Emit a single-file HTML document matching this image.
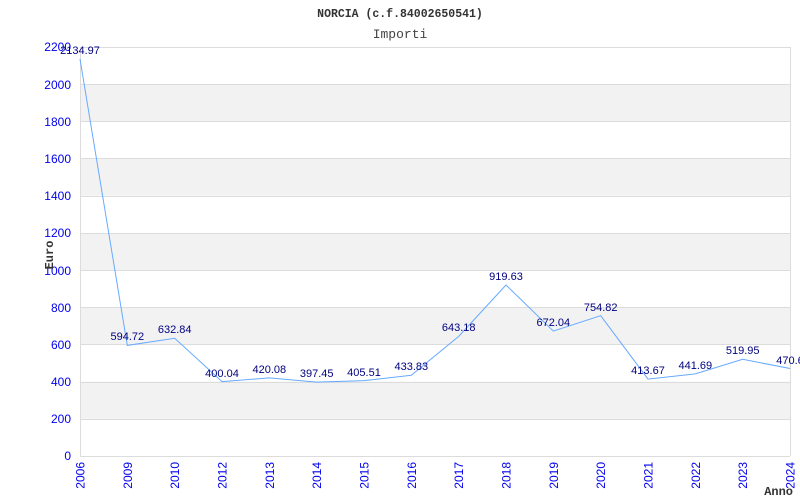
<!DOCTYPE html>
<html><head><meta charset="utf-8"><style>
html,body{margin:0;padding:0;background:#fff;}
svg{display:block;}
</style></head><body>
<svg width="800" height="500" xmlns="http://www.w3.org/2000/svg">
<rect width="800" height="500" fill="#fff"/>
<text x="400" y="17" text-anchor="middle" font-family="Liberation Mono, monospace" font-size="11.5" font-weight="bold" fill="#333">NORCIA (c.f.84002650541)</text>
<text x="400" y="38" text-anchor="middle" font-family="Liberation Mono, monospace" font-size="13" fill="#444">Importi</text>
<g fill="#f2f2f2">
<rect x="80" y="84.2" width="710" height="37.2"/>
<rect x="80" y="158.5" width="710" height="37.2"/>
<rect x="80" y="232.9" width="710" height="37.2"/>
<rect x="80" y="307.3" width="710" height="37.2"/>
<rect x="80" y="381.6" width="710" height="37.2"/>
</g>
<g stroke="#dcdcdc" stroke-width="1">
<line x1="80" y1="47.5" x2="790" y2="47.5"/>
<line x1="80" y1="84.5" x2="790" y2="84.5"/>
<line x1="80" y1="121.5" x2="790" y2="121.5"/>
<line x1="80" y1="158.5" x2="790" y2="158.5"/>
<line x1="80" y1="196.5" x2="790" y2="196.5"/>
<line x1="80" y1="233.5" x2="790" y2="233.5"/>
<line x1="80" y1="270.5" x2="790" y2="270.5"/>
<line x1="80" y1="307.5" x2="790" y2="307.5"/>
<line x1="80" y1="344.5" x2="790" y2="344.5"/>
<line x1="80" y1="382.5" x2="790" y2="382.5"/>
<line x1="80" y1="419.5" x2="790" y2="419.5"/>
<line x1="80" y1="456.5" x2="790" y2="456.5"/>
<line x1="80.5" y1="47" x2="80.5" y2="456"/>
<line x1="790.5" y1="47" x2="790.5" y2="456"/>
</g>
<g font-family="Liberation Sans, sans-serif" font-size="12" fill="#0000ee" text-anchor="end">
<text x="71" y="51">2200</text><text x="71" y="89">2000</text><text x="71" y="126">1800</text>
<text x="71" y="163">1600</text><text x="71" y="200">1400</text><text x="71" y="237">1200</text>
<text x="71" y="275">1000</text><text x="71" y="312">800</text><text x="71" y="349">600</text>
<text x="71" y="386">400</text><text x="71" y="423">200</text><text x="71" y="460">0</text>
</g>
<text transform="translate(53,255) rotate(-90)" text-anchor="middle" font-family="Liberation Mono, monospace" font-size="12" font-weight="bold" fill="#333">Euro</text>
<text x="793" y="495" text-anchor="end" font-family="Liberation Mono, monospace" font-size="12" font-weight="bold" fill="#333">Anno</text>
<polyline fill="none" stroke="#66aaff" stroke-width="1" points="80,59.1 127.3,345.4 174.7,338.3 222,381.6 269.3,377.9 316.7,382.1 364,380.6 411.3,375.3 458.7,336.4 506,285 553.3,331.1 600.7,315.7 648,379.1 695.3,373.9 742.7,359.3 790,368.5"/>
<g font-family="Liberation Sans, sans-serif" font-size="11" fill="#000080" text-anchor="middle">
<text x="80" y="54">2134.97</text>
<text x="127.3" y="340">594.72</text>
<text x="174.7" y="333">632.84</text>
<text x="222" y="377">400.04</text>
<text x="269.3" y="373">420.08</text>
<text x="316.7" y="377">397.45</text>
<text x="364" y="376">405.51</text>
<text x="411.3" y="370">433.83</text>
<text x="458.7" y="331">643.18</text>
<text x="506" y="280">919.63</text>
<text x="553.3" y="326">672.04</text>
<text x="600.7" y="311">754.82</text>
<text x="648" y="374">413.67</text>
<text x="695.3" y="369">441.69</text>
<text x="742.7" y="354">519.95</text>
<text x="790" y="364">470.6</text>
</g>
<g font-family="Liberation Sans, sans-serif" font-size="12" fill="#0000ee" text-anchor="end">
<text transform="translate(84.5,462) rotate(-90)">2006</text>
<text transform="translate(131.8,462) rotate(-90)">2009</text>
<text transform="translate(179.2,462) rotate(-90)">2010</text>
<text transform="translate(226.5,462) rotate(-90)">2012</text>
<text transform="translate(273.8,462) rotate(-90)">2013</text>
<text transform="translate(321.2,462) rotate(-90)">2014</text>
<text transform="translate(368.5,462) rotate(-90)">2015</text>
<text transform="translate(415.8,462) rotate(-90)">2016</text>
<text transform="translate(463.2,462) rotate(-90)">2017</text>
<text transform="translate(510.5,462) rotate(-90)">2018</text>
<text transform="translate(557.8,462) rotate(-90)">2019</text>
<text transform="translate(605.2,462) rotate(-90)">2020</text>
<text transform="translate(652.5,462) rotate(-90)">2021</text>
<text transform="translate(699.8,462) rotate(-90)">2022</text>
<text transform="translate(747.2,462) rotate(-90)">2023</text>
<text transform="translate(794.5,462) rotate(-90)">2024</text>
</g>
</svg>
</body></html>
